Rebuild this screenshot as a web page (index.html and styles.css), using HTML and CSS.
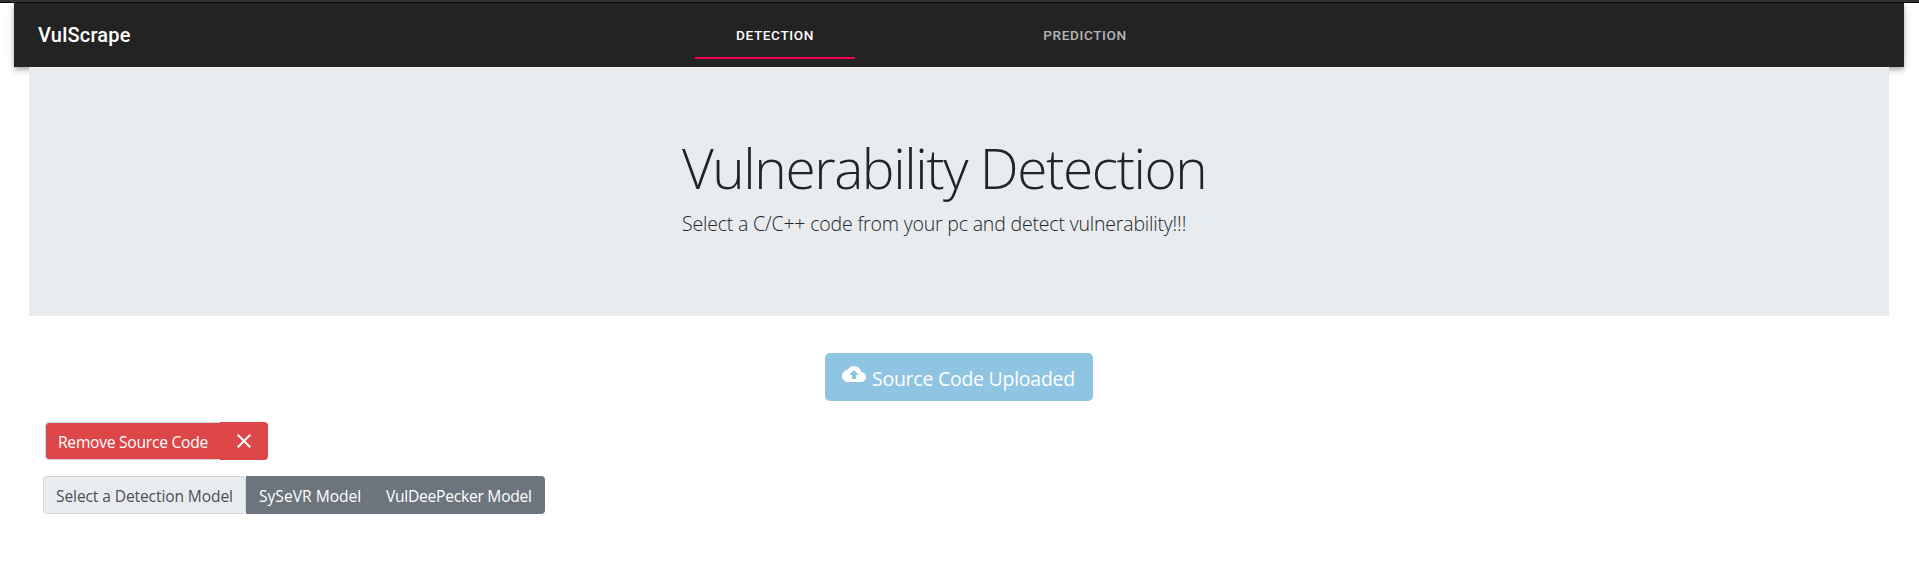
FILE: index.html
```
<!DOCTYPE html>
<html lang="en">
<head>
<meta charset="utf-8">
<title>VulScrape</title>
<link rel="stylesheet" href="styles.css">
</head>
<body>
<div class="topline"></div>
<header class="appbar">
  <div class="brand">VulScrape</div>
  <nav class="tabs">
    <a class="tab active">DETECTION</a>
    <a class="tab">PREDICTION</a>
  </nav>
</header>
<main class="page">
  <section class="hero">
    <div class="hero-text">
      <h1><span>Vulnerability Detection</span></h1>
      <p><span>Select a C/C++ code from your pc and detect vulnerability!!!</span></p>
    </div>
  </section>
  <div class="upload-row">
    <button class="upload" disabled>
      <svg class="cloud" viewBox="0 0 24 24"><path fill="currentColor" d="M19.35 10.04A7.49 7.49 0 0 0 12 4C9.11 4 6.6 5.64 5.35 8.04A5.994 5.994 0 0 0 0 14c0 3.31 2.69 6 6 6h13c2.76 0 5-2.24 5-5 0-2.64-2.05-4.78-4.65-4.96zM14 13v4h-4v-4H7l5-5 5 5h-3z"/></svg>
      <span>Source Code Uploaded</span>
    </button>
  </div>
  <div class="group remove">
    <span class="remove-label"><span>Remove Source Code</span></span>
    <button class="close" aria-label="Remove"><svg viewBox="0 0 24 24"><path fill="currentColor" d="M19 6.41 17.59 5 12 10.59 6.41 5 5 6.41 10.59 12 5 17.59 6.41 19 12 13.41 17.59 19 19 17.59 13.41 12z"/></svg></button>
  </div>
  <div class="group models">
    <span class="model-label"><span>Select a Detection Model</span></span>
    <button class="model sysevr"><span>SySeVR Model</span></button>
    <button class="model pecker"><span>VulDeePecker Model</span></button>
  </div>
</main>
</body>
</html>
```
FILE: styles.css
```
* { box-sizing: border-box; }
body {
  margin: 0;
  background: #fff;
  color: #212529;
  font: 15.6px/24px "Segoe UI", "Open Sans", "Noto Sans", sans-serif;
  overflow: hidden;
}
button { font: inherit; border: 0; margin: 0; padding: 0; }
span { white-space: nowrap; }
.topline { height: 3px; background: #333; border-bottom: 1px solid #0b0b0b; }
.appbar {
  display: flex;
  align-items: center;
  height: 64px;
  margin: 0 15px 0 14px;
  padding-left: 24px;
  background: #232323;
  color: #fff;
  font-family: Roboto, sans-serif;
  clip-path: inset(0 -20px -20px -20px);
  box-shadow: 0 2px 4px -1px rgba(0,0,0,.2), 0 4px 5px rgba(0,0,0,.14), 0 1px 10px rgba(0,0,0,.12);
}
.brand { width: 657px; font-size: 20px; font-weight: 500; letter-spacing: .2px; }
.tabs { display: flex; gap: 150px; height: 48px; }
.tab {
  width: 160px;
  height: 48px;
  line-height: 49px;
  text-align: center;
  font-size: 13.6px;
  font-weight: 500;
  letter-spacing: .62px;
  color: rgba(255,255,255,.68);
}
.tab.active { color: #fff; border-bottom: 2px solid #f50057; }
.page { position: relative; padding: 0 30px 0 29px; }
.hero { height: 249px; background: #e9ecef; padding: 67px 0 0 653px; }
.hero h1 {
  margin: 0;
  font-size: 55px;
  line-height: 67px;
  font-weight: 300;
  letter-spacing: -1.43px;
}
.hero p { margin: 8px 0 0; font-size: 19.5px; line-height: 30px; font-weight: 300; letter-spacing: -.18px; }
.upload-row { display: flex; justify-content: center; padding-top: 37px; }
.upload {
  display: flex;
  width: 268px;
  height: 48px;
  padding: 9px 0 0 17px;
  border-radius: 5px;
  background: #90c4e3;
  color: #fff;
  font-size: 19.5px;
  line-height: 34px;
  letter-spacing: -.26px;
}
.cloud { width: 24px; height: 24px; margin-right: 6px; }
.group { display: flex; height: 38px; }
.remove { margin: 21px 0 0 16px; }
.remove-label {
  width: 175px;
  padding-left: 12px;
  border: 1px solid #ced4da;
  border-right: 0;
  border-radius: 4px 0 0 4px;
  background: #dc4648;
  background-clip: padding-box;
  color: #fff;
  line-height: 38px;
  letter-spacing: -.25px;
}
.close {
  display: flex;
  width: 48px;
  padding: 7px 0 0 12px;
  border-radius: 0 4px 4px 0;
  background: #dc4648;
  color: #fff;
}
.close svg { width: 24px; height: 24px; }
.models { margin: 16px 0 0 14px; }
.model-label {
  width: 203px;
  padding-left: 12px;
  border: 1px solid #ced4da;
  border-radius: 4px;
  background: #e9ecef;
  color: #495057;
  line-height: 38px;
  letter-spacing: -.12px;
}
.model { padding-left: 13px; background: #6c757d; color: #fff; text-align: left; line-height: 40px; }
.sysevr { width: 127px; }
.pecker { width: 172px; border-radius: 0 4px 4px 0; letter-spacing: -.25px; }
```
